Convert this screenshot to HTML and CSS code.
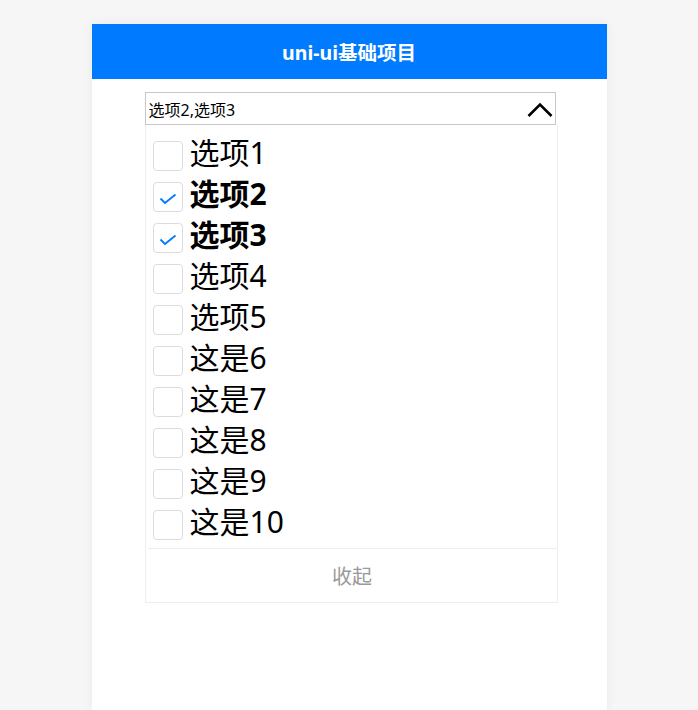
FILE: index.html
```html
<!DOCTYPE html>
<html lang="zh">
<head>
<meta name="viewport" content="width=device-width, initial-scale=1">
<title>uni-ui基础项目</title>
<link rel="stylesheet" href="styles.css">
</head>
<body>

<div class="page">
  <div class="navBar">uni-ui基础项目</div>

  <div class="selectWrap">
    <div class="selectBox">
      <span class="selectValue">选项2,选项3</span>
      <svg class="arrow" width="26" height="16" viewBox="0 0 26 16">
        <polyline points="1.5,14 13,2.5 24.5,14" fill="none" stroke="#000" stroke-width="2.6"/>
      </svg>
    </div>

    <div class="dropdown">
      <div class="optionList">
        <div class="option"><span class="box"></span><span class="label">选项1</span></div>
        <div class="option checked"><span class="box"><svg width="18" height="12" viewBox="0 0 18 12"><polyline points="1.5,5.5 6,10 16.5,1.5" fill="none" stroke="#007aff" stroke-width="1.8"/></svg></span><span class="label">选项2</span></div>
        <div class="option checked"><span class="box"><svg width="18" height="12" viewBox="0 0 18 12"><polyline points="1.5,5.5 6,10 16.5,1.5" fill="none" stroke="#007aff" stroke-width="1.8"/></svg></span><span class="label">选项3</span></div>
        <div class="option"><span class="box"></span><span class="label">选项4</span></div>
        <div class="option"><span class="box"></span><span class="label">选项5</span></div>
        <div class="option"><span class="box"></span><span class="label">这是6</span></div>
        <div class="option"><span class="box"></span><span class="label">这是7</span></div>
        <div class="option"><span class="box"></span><span class="label">这是8</span></div>
        <div class="option"><span class="box"></span><span class="label">这是9</span></div>
        <div class="option"><span class="box"></span><span class="label">这是10</span></div>
      </div>
      <div class="collapse">收起</div>
    </div>
  </div>
</div>

</body>
</html>
```

FILE: styles.css
```css
html, body {
    margin: 0;
    height: 100%;
}

body {
    background-color: #f6f6f6;
    font-family: "Noto Sans", "Noto Sans CJK SC", sans-serif;
    color: #000;
}

.page {
    width: 515px;
    min-height: 686px;
    margin: 24px auto 0;
    background-color: #fff;
    box-shadow: 0 0 10px rgba(0, 0, 0, 0.06);
    display: flex;
    flex-direction: column;
}

.navBar {
    height: 55px;
    background-color: #007aff;
    color: #fff;
    font-size: 19.5px;
    font-weight: bold;
    display: flex;
    align-items: center;
    justify-content: center;
}

.selectWrap {
    width: 413px;
    margin: 13px 0 0 53px;
    display: flex;
    flex-direction: column;
}

.selectBox {
    width: 411px;
    height: 33px;
    border: 1px solid #c8c8c8;
    display: flex;
    align-items: center;
    justify-content: space-between;
    padding: 0 2px 0 3px;
    box-sizing: border-box;
}

.selectValue {
    font-size: 16px;
}

.arrow {
    display: block;
    margin-top: 2px;
}

.dropdown {
    border: 1px solid #eee;
    border-top: none;
    display: flex;
    flex-direction: column;
}

.optionList {
    padding: 10px 0 3px 7px;
    display: flex;
    flex-direction: column;
}

.option {
    height: 41px;
    display: flex;
    align-items: center;
    gap: 7px;
}

.box {
    width: 28px;
    height: 28px;
    border: 1px solid #dcdcdc;
    border-radius: 4px;
    display: flex;
    align-items: center;
    justify-content: center;
}

.box svg {
    display: block;
    margin-top: 4px;
}

.label {
    font-size: 30px;
    line-height: 36px;
    padding-bottom: 5px;
}

.checked .label {
    font-weight: bold;
}

.collapse {
    margin-left: 2px;
    border-top: 1px solid #eee;
    height: 53px;
    display: flex;
    align-items: center;
    justify-content: center;
    color: #999;
    font-size: 20px;
}
```
